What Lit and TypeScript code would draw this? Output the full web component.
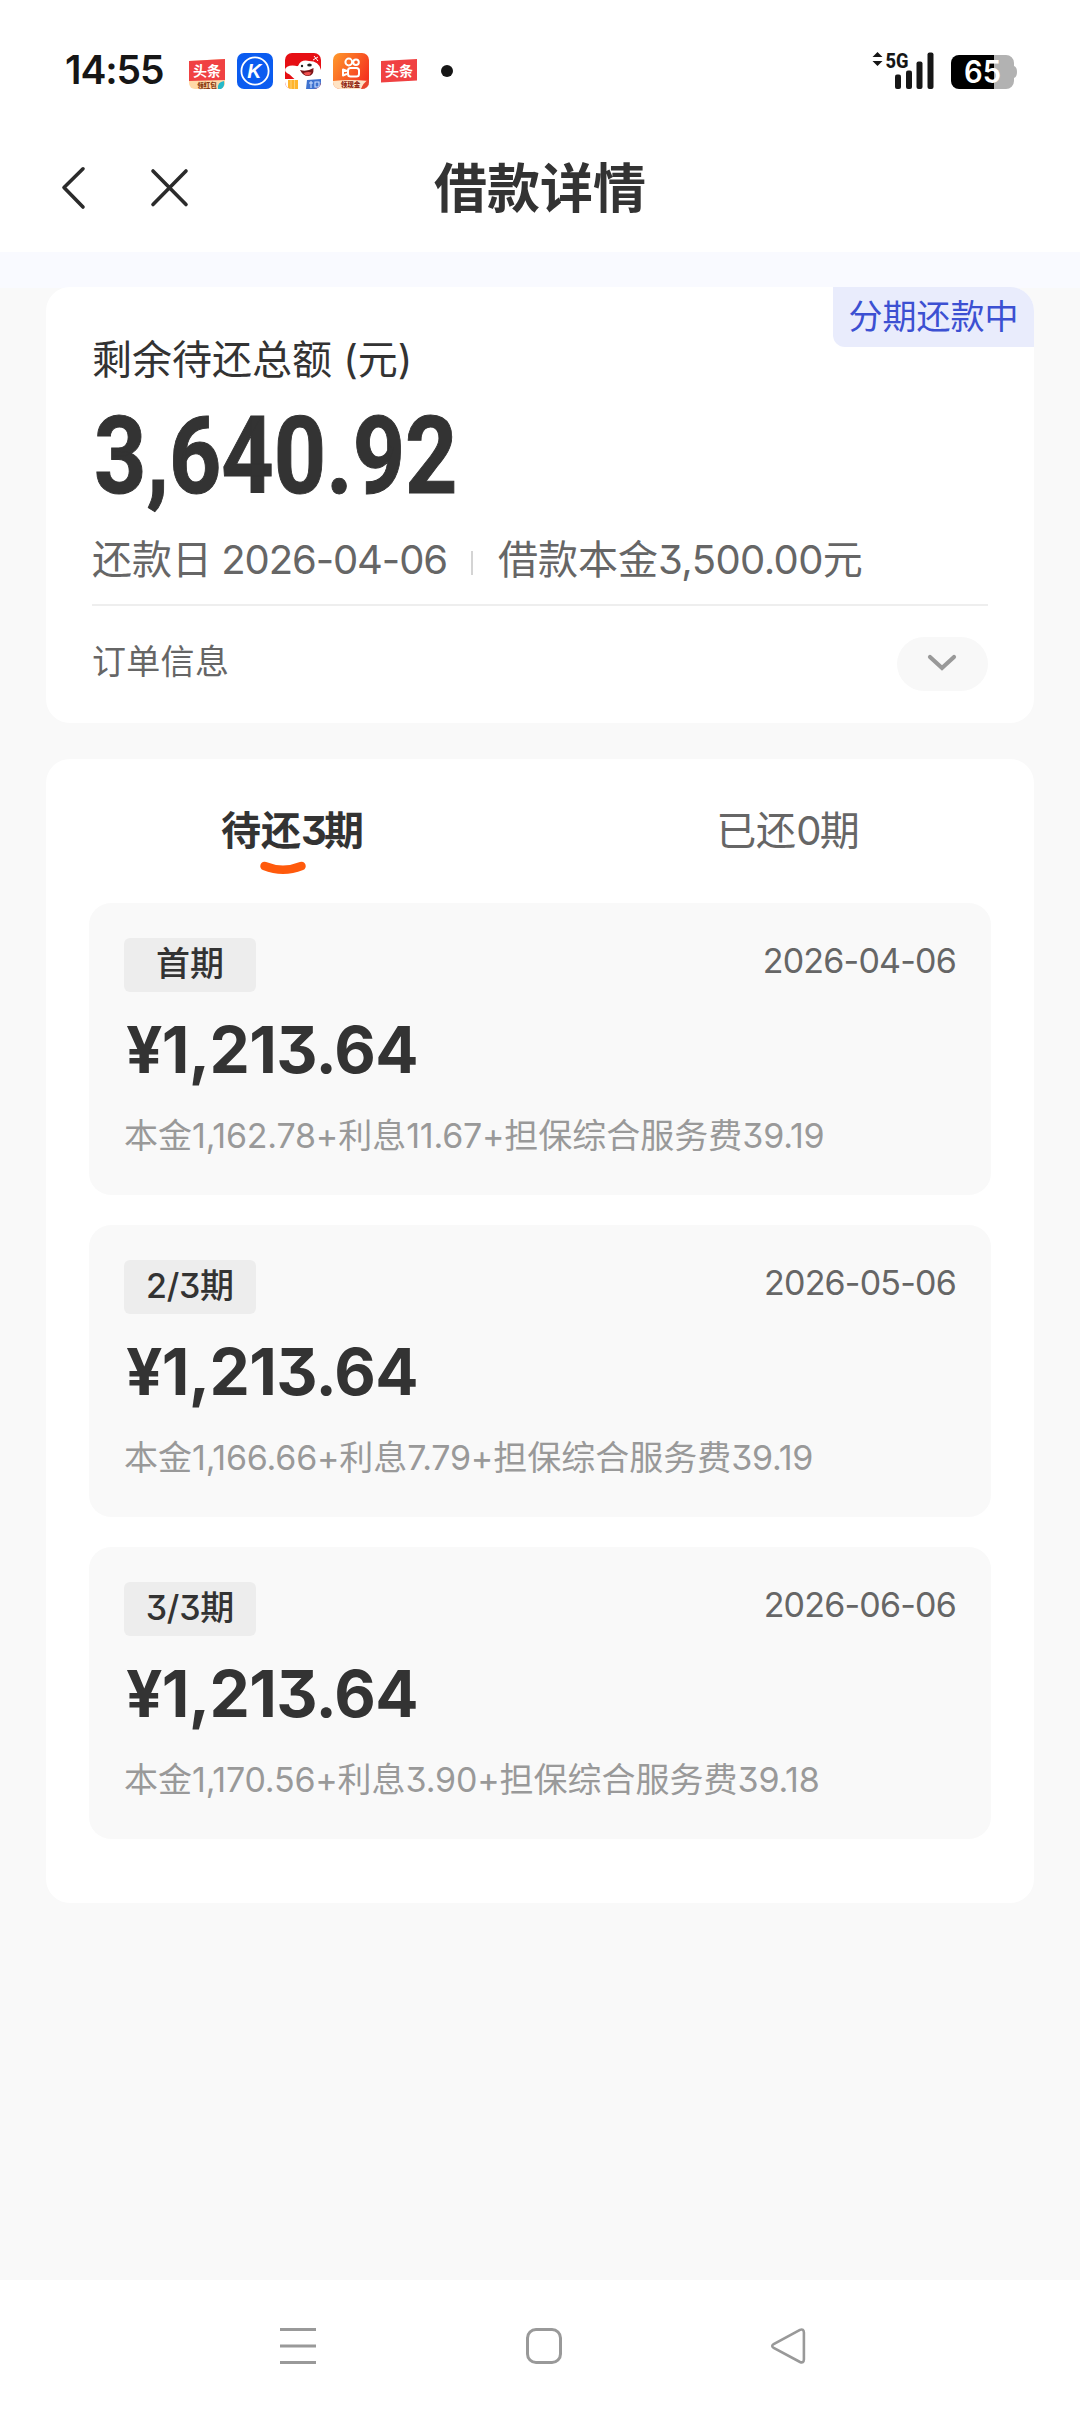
import { LitElement, html, css, svg } from "lit";
import { customElement, property } from "lit/decorators.js";

interface Installment {
  label: string;
  date: string;
  amount: string;
  detail: string;
}

const INSTALLMENTS: Installment[] = [
  { label: "首期", date: "2026-04-06", amount: "¥1,213.64", detail: "本金1,162.78+利息11.67+担保综合服务费39.19" },
  { label: "2/3期", date: "2026-05-06", amount: "¥1,213.64", detail: "本金1,166.66+利息7.79+担保综合服务费39.19" },
  { label: "3/3期", date: "2026-06-06", amount: "¥1,213.64", detail: "本金1,170.56+利息3.90+担保综合服务费39.18" },
];

/* Wraps the Latin runs of a mixed string so that they get their own tracking. */
const mixed = (text: string) =>
  text
    .split(/([0-9.,+\/-]+)/)
    .filter((part) => part !== "")
    .map((part) => (/^[0-9.,+\/-]+$/.test(part) ? html`<span class="num">${part}</span>` : part));

const base = css`
  * {
    box-sizing: border-box;
  }
  :host {
    display: block;
    font-family: Inter, "Noto Sans CJK SC", sans-serif;
    font-feature-settings: "cv09" 1;
    color: #333;
  }
  svg {
    display: block;
    flex: none;
    overflow: visible;
  }
  .num {
    letter-spacing: var(--track, 0);
  }
`;

@customElement("status-bar")
export class StatusBar extends LitElement {
  static styles = [
    base,
    css`
      :host {
        height: 128px;
      }
      .bar {
        display: flex;
        align-items: center;
        height: 128px;
        padding: 14px 63px 0 65px;
      }
      .time {
        width: 124px;
        padding-bottom: 2px;
        font-size: 39px;
        font-weight: 600;
        line-height: 56px;
        letter-spacing: -1.1px;
        color: #161616;
        white-space: nowrap;
      }
      .icons {
        display: flex;
        gap: 12px;
        flex: 1;
      }
      .dot {
        width: 12px;
        height: 12px;
        margin: 12px 0 0 12px;
        border-radius: 50%;
        background: #161616;
      }
    `,
  ];

  render() {
    return html`
      <div class="bar">
        <div class="time">14:55</div>
        <div class="icons">
          <svg width="36" height="36" viewBox="0 0 36 36">
            <path d="M0 8 L36 6 V30 a6 6 0 0 1 -6 6 H6 a6 6 0 0 1 -6 -6z" fill="#ffd9a8" />
            <path d="M0 8 L36 6 V27 L0 28z" fill="#f04142" />
            <text x="18" y="23" text-anchor="middle" font-size="14" font-weight="700" fill="#fff" font-family="Noto Sans CJK SC">头条</text>
            <text x="18" y="34.5" text-anchor="middle" font-size="6.5" font-weight="900" fill="#8a3a12" font-family="Noto Sans CJK SC">领红包</text>
            <path d="M29 36 q-1 -7 6 -8 q1 6 -3 8z" fill="#25b9c9" />
          </svg>
          <svg width="36" height="36" viewBox="0 0 36 36">
            <rect width="36" height="36" rx="7" fill="#0b5cf0" />
            <circle cx="18" cy="18" r="13.6" fill="none" stroke="#fff" stroke-width="1.8" />
            <text x="17.2" y="25" text-anchor="middle" font-size="19.500" font-weight="800" font-style="italic" fill="#fff" font-family="Liberation Sans">K</text>
          </svg>
          <svg width="36" height="36" viewBox="0 0 36 36">
            <defs><clipPath id="joy"><rect width="36" height="36" rx="7" /></clipPath></defs>
            <g clip-path="url(#joy)">
              <rect width="36" height="36" fill="#e60f14" />
              <path d="M13 13 Q16 6 24 8 Q34 8 36 17 L36 30 H14 Q7 24 2 19 Q4 14 13 13z" fill="#fff" />
              <ellipse cx="7.5" cy="17" rx="7.5" ry="4.5" fill="#fff" />
              <circle cx="17" cy="13" r="1.2" fill="#222" />
              <ellipse cx="24.5" cy="12" rx="2.3" ry="1.6" fill="#222" />
              <path d="M15 17 Q22 19 28.500 15 Q29 23 23 23 Q18 23 15 17z" fill="#7c1518" />
              <path d="M18.500 20 Q23 18.500 26.500 19.500 Q25 22.500 22.500 22.500 Q20 22.500 18.500 20z" fill="#f0504e" />
              <path d="M28 7 l5 -3 M29 3 l4 5" stroke="#fff" stroke-width="1" />
              <rect x="0" y="26" width="22" height="10" fill="#fff" />
              <path d="M3 27 H13 V36 H3z" fill="#ffb52e" />
              <path d="M6 27 V36 M9.500 27 V36" stroke="#ffd27a" stroke-width="1" />
              <path d="M22 27 L36 26 V36 H21z" fill="#3f73d0" />
              <path d="M24 30 h4 M26 28 v7 M30 29 h4 v5 h-4z" stroke="#cfe0ff" stroke-width="1.1" fill="none" />
            </g>
          </svg>
          <svg width="36" height="36" viewBox="0 0 36 36">
            <defs>
              <linearGradient id="ks" x1="0" y1="0" x2="1" y2="0.6">
                <stop offset="0" stop-color="#ff9a2b" />
                <stop offset="1" stop-color="#f5331f" />
              </linearGradient>
              <clipPath id="ksc"><rect width="36" height="36" rx="7" /></clipPath>
            </defs>
            <g clip-path="url(#ksc)">
              <rect width="36" height="36" fill="url(#ks)" />
              <path d="M0 28 Q16 26 36 28 V36 H0z" fill="#ffe3c4" />
              <path d="M28 36 Q30 30 36 26 V36z" fill="#e8452c" />
              <g fill="none" stroke="#fff" stroke-width="2">
                <circle cx="15.800" cy="9" r="3.400" />
                <circle cx="23" cy="9.300" r="2.800" />
                <rect x="15" y="15" width="11" height="8.600" rx="2.600" />
                <path d="M14 18 L10 16.500 V22.500 L14 20.800" stroke-linejoin="round" />
              </g>
            </g>
            <text x="17.500" y="34.300" text-anchor="middle" font-size="6.500" font-weight="900" fill="#8e1f10" font-family="Noto Sans CJK SC">领现金</text>
          </svg>
          <svg width="36" height="36" viewBox="0 0 36 36">
            <path d="M0 8 L36 6 V27.500 L0 29.500z" fill="#f04142" />
            <text x="18" y="23" text-anchor="middle" font-size="14" font-weight="700" fill="#fff" font-family="Noto Sans CJK SC">头条</text>
          </svg>
          <div class="dot"></div>
        </div>
        <svg width="145" height="52" viewBox="0 -6 145 52">
          <path d="M5.500 1 L10.500 6 H0.500z M0.500 10 H10.500 L5.500 15z" fill="#161616" />
          <text x="13.500" y="16.500" font-size="21" font-weight="800" fill="#161616" font-family="Roboto" textLength="23" lengthAdjust="spacingAndGlyphs">5G</text>
          <g fill="#161616">
            <rect x="23" y="23.500" width="6" height="14.500" rx="2" />
            <rect x="34" y="19.500" width="6" height="18.500" rx="2" />
            <rect x="44.500" y="10.500" width="6" height="27.500" rx="2" />
            <rect x="55.500" y="1.500" width="6" height="36.500" rx="2" />
          </g>
          <path d="M122 4 H134 a8 8 0 0 1 8 8 v3 q3 1 3 6 t-3 6 v3 a8 8 0 0 1 -8 8 H122z" fill="#b2b2b2" />
          <path d="M122 4 H87 a8 8 0 0 0 -8 8 V30 a8 8 0 0 0 8 8 H122z" fill="#000" />
          <text x="110.500" y="32" text-anchor="middle" font-size="31" font-weight="600" fill="#fff" font-family="Inter" textLength="37" lengthAdjust="spacingAndGlyphs">65</text>
        </svg>
      </div>
    `;
  }
}

@customElement("page-header")
export class PageHeader extends LitElement {
  static styles = [
    base,
    css`
      .header {
        display: grid;
        grid-template-columns: 1fr auto 1fr;
        align-items: center;
        height: 124px;
        padding: 0 60px 3px 60px;
      }
      .actions {
        display: flex;
        gap: 60px;
      }
      .title {
        margin: 0;
        font-size: 53px;
        font-weight: 700;
        line-height: 120px;
      }
    `,
  ];

  render() {
    return html`
      <div class="header">
        <div class="actions">
          <svg width="28" height="44" viewBox="0 0 28 44" fill="none" stroke="#2b2b2b" stroke-width="3.600" stroke-linecap="round" stroke-linejoin="round">
            <path d="M23 1.800 L4 20.500 L23 40" />
          </svg>
          <svg width="44" height="44" viewBox="0 0 44 44" fill="none" stroke="#2b2b2b" stroke-width="3.600" stroke-linecap="round">
            <path d="M5 4 L38 37.500 M38 4 L5 37.500" />
          </svg>
        </div>
        <h1 class="title">借款详情</h1>
      </div>
    `;
  }
}

@customElement("summary-card")
export class SummaryCard extends LitElement {
  static styles = [
    base,
    css`
      .card {
        position: relative;
        display: flex;
        flex-direction: column;
        height: 436px;
        padding: 43px 46px 0;
        border-radius: 24px;
        background: #fff;
        overflow: hidden;
      }
      .badge {
        position: absolute;
        top: 0;
        right: 0;
        width: 201px;
        height: 60px;
        border-radius: 0 0 0 12px;
        background: #e9ecfc;
        color: #3c50d2;
        font-size: 34px;
        line-height: 59px;
        text-align: center;
      }
      .label {
        font-size: 40px;
        line-height: 60px;
      }
      .total {
        align-self: flex-start;
        margin: 13px 0 0 2px;
        font-family: Roboto, sans-serif;
        font-size: 107px;
        font-weight: 700;
        line-height: 108px;
        -webkit-text-stroke: 1px #333;
        transform: scaleX(0.854);
        transform-origin: 0 50%;
      }
      .meta {
        --track: -1.1px;
        display: flex;
        align-items: center;
        margin-top: 19px;
        font-size: 40px;
        line-height: 60px;
        color: #666;
        white-space: nowrap;
      }
      .due {
        word-spacing: -2px;
      }
      .principal {
        --track: -0.6px;
      }
      .sep {
        width: 2px;
        height: 24px;
        margin: 6px 25px 0 24px;
        background: #d4d4d4;
      }
      .rule {
        height: 2px;
        margin-top: 14px;
        background: #eee;
      }
      .order {
        display: flex;
        flex: 1;
        align-items: center;
        justify-content: space-between;
        padding-bottom: 1px;
        color: #666;
        font-size: 34px;
      }
      .order-text {
        padding-bottom: 5px;
        line-height: 50px;
        letter-spacing: 0.3px;
      }
      .toggle {
        display: flex;
        align-items: center;
        justify-content: center;
        width: 91px;
        height: 54px;
        padding: 0 2px 3px 0;
        border-radius: 27px;
        background: #f8f8f8;
      }
    `,
  ];

  render() {
    return html`
      <section class="card">
        <div class="badge">分期还款中</div>
        <div class="label">剩余待还总额 (元)</div>
        <div class="total">3,640.92</div>
        <div class="meta">
          <span class="due">还款日 ${mixed("2026-04-06")}</span>
          <i class="sep"></i>
          <span class="principal">${mixed("借款本金3,500.00元")}</span>
        </div>
        <div class="rule"></div>
        <div class="order">
          <span class="order-text">订单信息</span>
          <span class="toggle">
            <svg width="32" height="20" viewBox="0 0 32 20" fill="none" stroke="#999" stroke-width="4.200" stroke-linecap="round" stroke-linejoin="miter">
              <path d="M4 4 L16 15 L28 4" />
            </svg>
          </span>
        </div>
      </section>
    `;
  }
}

@customElement("installment-item")
export class InstallmentItem extends LitElement {
  @property({ attribute: false }) item!: Installment;

  static styles = [
    base,
    css`
      .item {
        height: 292px;
        padding: 35px;
        border-radius: 22px;
        background: #f9f9f9;
      }
      .top {
        display: flex;
        justify-content: space-between;
        align-items: flex-start;
      }
      .chip {
        --track: -0.3px;
        width: 132px;
        height: 54px;
        border-radius: 6px;
        background: #ededed;
        font-size: 34px;
        font-weight: 500;
        line-height: 51px;
        text-align: center;
      }
      .date {
        --track: -0.8px;
        font-size: 34px;
        line-height: 45px;
        color: #666;
      }
      .amount {
        margin: 23px 0 0 2px;
        font-size: 64px;
        font-weight: 700;
        line-height: 70px;
        letter-spacing: -0.65px;
      }
      .detail {
        --track: -0.2px;
        margin-top: 26px;
        font-size: 34px;
        line-height: 50px;
        color: #999;
        white-space: nowrap;
      }
    `,
  ];

  render() {
    const { label, date, amount, detail } = this.item;
    return html`
      <article class="item">
        <div class="top">
          <span class="chip">${mixed(label)}</span>
          <span class="date">${mixed(date)}</span>
        </div>
        <div class="amount">${amount}</div>
        <div class="detail">${mixed(detail)}</div>
      </article>
    `;
  }
}

@customElement("plan-card")
export class PlanCard extends LitElement {
  static styles = [
    base,
    css`
      .card {
        padding: 41px 43px 64px;
        border-radius: 24px;
        background: #fff;
      }
      .tabs {
        --track: -1.5px;
        display: grid;
        grid-template-columns: 1fr 1fr;
        height: 103px;
        margin: 0 -43px;
        font-size: 40px;
        line-height: 61px;
        text-align: center;
        color: #666;
      }
      .tab {
        display: flex;
        flex-direction: column;
        align-items: center;
        padding-left: 2px;
      }
      .active {
        --track: -3px;
        padding: 0 1px 0 0;
        font-weight: 700;
        color: #333;
      }
      .smile {
        margin-right: 20px;
      }
      .list {
        display: flex;
        flex-direction: column;
        gap: 30px;
      }
    `,
  ];

  render() {
    return html`
      <section class="card">
        <div class="tabs">
          <div class="tab active">
            <span>${mixed("待还3期")}</span>
            <svg class="smile" width="48" height="15" viewBox="0 0 48 15" fill="none" stroke="#ff5a0c" stroke-width="8.500" stroke-linecap="round">
              <path d="M5.500 5 Q24 12.500 42.500 5" />
            </svg>
          </div>
          <div class="tab"><span>${mixed("已还0期")}</span></div>
        </div>
        <div class="list">
          ${INSTALLMENTS.map((item) => html`<installment-item .item=${item}></installment-item>`)}
        </div>
      </section>
    `;
  }
}

const NAV_SHAPES = [
  svg`<path d="M2 5.500 H38 M2 22 H38 M2 38.500 H38" />`,
  svg`<rect x="3.500" y="5.500" width="33" height="33" rx="8.500" />`,
  svg`<path d="M30 5.900 L3.700 20 Q0.700 22 3.700 24 L30 38 Q33.700 39.500 33.900 35.500 V8.500 Q33.700 4.500 30 5.900z" stroke-width="2.600" />`,
];

@customElement("nav-bar")
export class NavBar extends LitElement {
  static styles = [
    base,
    css`
      .nav {
        display: flex;
        align-items: center;
        gap: 206px;
        height: 132px;
        padding-left: 278px;
        background: #fff;
      }
    `,
  ];

  render() {
    return html`
      <nav class="nav">
        ${NAV_SHAPES.map(
          (shape) => html`<svg width="40" height="44" viewBox="0 0 40 44" fill="none" stroke="#999" stroke-width="3">${shape}</svg>`,
        )}
      </nav>
    `;
  }
}

@customElement("app-root")
export class AppRoot extends LitElement {
  static styles = [
    base,
    css`
      .page {
        display: flex;
        flex-direction: column;
        height: 2412px;
        background: #f9f9f9;
      }
      .head {
        background: #fff;
      }
      .content {
        display: flex;
        flex: 1;
        flex-direction: column;
        gap: 36px;
        padding: 35px 46px 0;
        background: linear-gradient(#f9faff, #f9faff) 0 0 / 100% 36px no-repeat;
      }
    `,
  ];

  render() {
    return html`
      <main class="page">
        <header class="head">
          <status-bar></status-bar>
          <page-header></page-header>
        </header>
        <div class="content">
          <summary-card></summary-card>
          <plan-card></plan-card>
        </div>
        <nav-bar></nav-bar>
      </main>
    `;
  }
}
